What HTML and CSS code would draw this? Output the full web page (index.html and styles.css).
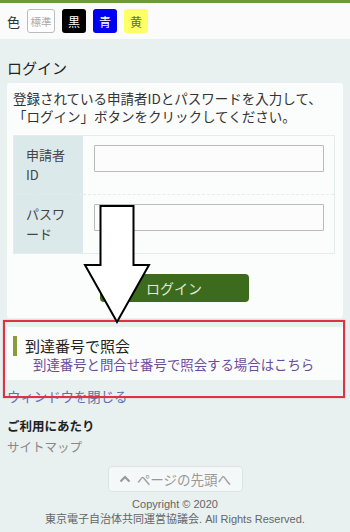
FILE: index.html
```html
<!DOCTYPE html>
<html lang="ja">
  <head>
    <meta charset="UTF-8" />
    <meta name="viewport" content="width=device-width, initial-scale=1.0" />
    <title>ログイン</title>
    <link rel="stylesheet" href="styles.css">
  </head>
  <body>
    <div class="topbar"></div>
    <div class="colorbar">
      <span class="color-label">色</span>
      <span class="swatch swatch-std">標準</span>
      <span class="swatch swatch-black">黒</span>
      <span class="swatch swatch-blue">青</span>
      <span class="swatch swatch-yellow">黄</span>
    </div>
    <div class="main">
      <h2 class="section-title">ログイン</h2>
      <div class="card">
        <p class="lead">登録されている申請者IDとパスワードを入力して、<br>「ログイン」ボタンをクリックしてください。</p>
        <table class="login-table">
          <tr>
            <th>申請者<br>ID</th>
            <td><input type="text" class="field" /></td>
          </tr>
          <tr>
            <th>パスワ<br>ード</th>
            <td><input type="password" class="field" /></td>
          </tr>
        </table>
        <div class="button-row">
          <button class="button-login">ログイン</button>
        </div>
      </div>
      <div class="inquiry">
        <h3 class="inquiry-title">到達番号で照会</h3>
        <a class="inquiry-link" href="#">到達番号と問合せ番号で照会する場合はこちら</a>
      </div>
      <a class="close-link" href="#">ウィンドウを閉じる</a>
      <div class="footer">
        <div class="footer-title">ご利用にあたり</div>
        <div class="footer-item">サイトマップ</div>
        <div class="pagetop-row">
          <a class="pagetop" href="#">
            <svg width="12" height="8" viewBox="0 0 12 8"><path d="M1.5 6.5 L6 2 L10.5 6.5" fill="none" stroke="#999" stroke-width="2.2"/></svg>
            ページの先頭へ
          </a>
        </div>
        <div class="copyright">Copyright © 2020<br>東京電子自治体共同運営協議会. All Rights Reserved.</div>
      </div>
    </div>

    <div class="mark-box"></div>
    <svg class="mark-arrow" width="350" height="532" viewBox="0 0 350 532">
      <polygon points="100.5,206 133.5,206 133.5,265 149,265 117,322 85,265 100.5,265" fill="#fff" stroke="#000" stroke-width="2" stroke-linejoin="miter"/>
    </svg>
  </body>
</html>
```

FILE: styles.css
```css
body {
  margin: 0;
  font-family: "Noto Sans CJK JP", "Noto Sans", sans-serif;
  color: #333;
  background-color: #e8f0f0;
  position: relative;
}
.topbar {
  height: 3px;
  background-color: #6b9a3c;
}
.colorbar {
  height: 36px;
  display: flex;
  align-items: center;
  padding: 0 7px;
  background-color: #fafbfa;
}
.color-label {
  font-size: 13px;
  margin-right: 7px;
}
.swatch {
  width: 24px;
  height: 24px;
  box-sizing: border-box;
  border-radius: 3px;
  display: flex;
  align-items: center;
  justify-content: center;
  font-size: 12px;
  margin-right: 7px;
}
.swatch-std {
  width: 28px;
  background-color: #fff;
  border: 1px solid #bbb;
  color: #aaa;
  font-size: 10.5px;
}
.swatch-black {
  background-color: #000;
  color: #fff;
}
.swatch-blue {
  background-color: #0000f0;
  color: #fff;
}
.swatch-yellow {
  background-color: #ffff66;
  color: #666;
}
.main {
  padding: 18px 7px 0;
}
.section-title {
  margin: 0 0 4px;
  font-size: 15px;
  font-weight: normal;
  line-height: 22px;
  color: #222;
}
.card {
  background-color: #fbfcfc;
  border-radius: 3px;
  padding: 6px 8px 16px 6px;
}
.lead {
  margin: 0;
  font-size: 13.5px;
  line-height: 18px;
  color: #333;
}
.login-table {
  width: 100%;
  margin-top: 10px;
  border-collapse: collapse;
  border: 1px solid #e4ecec;
}
.login-table tr + tr {
  border-top: 1px dashed #e4ecec;
}
.login-table th {
  width: 45px;
  padding: 9px 12px;
  background-color: #dce9eb;
  font-size: 13px;
  font-weight: normal;
  line-height: 20px;
  text-align: left;
  color: #444;
  vertical-align: middle;
}
.login-table td {
  padding: 9px 10px 21px 11px;
  vertical-align: top;
}
.field {
  display: block;
  width: 100%;
  height: 27px;
  box-sizing: border-box;
  border: 1px solid #bbb;
  border-radius: 1px;
  background-color: #fcfcfc;
}
.button-row {
  margin-top: 20px;
  display: flex;
  justify-content: center;
}
.button-login {
  width: 149px;
  height: 28px;
  border: none;
  border-radius: 4px;
  background-color: #3c6b1e;
  color: #dfead6;
  font-family: inherit;
  font-size: 14px;
}
.inquiry {
  margin-top: 9px;
  background-color: #fbfcfc;
  padding: 9px 6px 8px;
}
.inquiry-title {
  margin: 0;
  padding-left: 8px;
  border-left: 4px solid #8c9a3a;
  font-size: 15px;
  font-weight: normal;
  line-height: 20px;
  color: #222;
}
.inquiry-link {
  display: block;
  padding-left: 20px;
  font-size: 13.4px;
  line-height: 16px;
  color: #6a4c9c;
  text-decoration: none;
}
.close-link {
  display: block;
  margin-top: 9px;
  font-size: 13.4px;
  line-height: 15px;
  color: #5c70b2;
  text-decoration: none;
}
.footer-title {
  margin-top: 14px;
  font-size: 12.5px;
  font-weight: bold;
  line-height: 16px;
  color: #222;
}
.footer-item {
  margin-top: 5px;
  font-size: 12.5px;
  line-height: 16px;
  color: #888;
}
.pagetop-row {
  margin-top: 11px;
  display: flex;
  justify-content: center;
}
.pagetop {
  width: 135px;
  height: 26px;
  box-sizing: border-box;
  border: 1px solid #dde3e3;
  border-radius: 4px;
  background-color: #f5f8f8;
  display: flex;
  align-items: center;
  justify-content: center;
  gap: 6px;
  font-size: 13.5px;
  color: #999;
  text-decoration: none;
}
.copyright {
  margin-top: 5px;
  text-align: center;
  font-family: "Liberation Sans", "Noto Sans CJK JP", sans-serif;
  font-size: 11px;
  line-height: 15px;
  color: #666;
}
.mark-box {
  position: absolute;
  left: 3px;
  top: 320px;
  width: 342px;
  height: 78px;
  box-sizing: border-box;
  border: 2px solid #dc3445;
  box-shadow: 0 0 1px rgba(220, 52, 69, 0.6);
}
.mark-arrow {
  position: absolute;
  left: 0;
  top: 0;
  pointer-events: none;
}
```
